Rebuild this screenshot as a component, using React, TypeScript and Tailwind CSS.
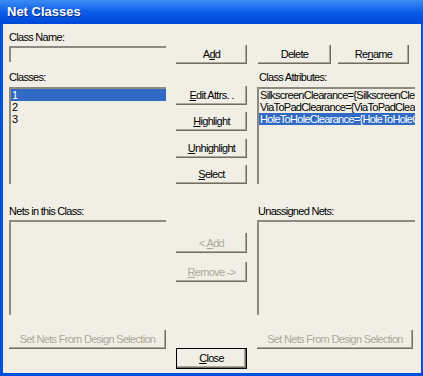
import React from 'react';

const btnBase =
  'flex items-center justify-center h-[19px] text-[11px] shadow-[inset_-1px_-1px_0_#716f64,inset_-2px_-2px_0_#aca899]';

function Btn({ children, className = '', disabled = false }: { children: React.ReactNode; className?: string; disabled?: boolean }) {
  return (
    <div className={`${btnBase} ${disabled ? 'text-[#aca899]' : 'text-black'} ${className}`}>
      <span className="whitespace-nowrap">{children}</span>
    </div>
  );
}

function ListBox({ items, selected, className = '' }: { items: string[]; selected?: number; className?: string }) {
  return (
    <div className={`border-t-2 border-l-2 border-[#8d8b81] overflow-hidden ${className}`}>
      {items.map((it, i) => (
        <div
          key={i}
          className={`h-[12px] leading-[12px] pl-[1px] whitespace-nowrap text-[11px] ${i === selected ? 'bg-[#316ac5] text-white' : 'text-black'}`}
        >
          {it}
        </div>
      ))}
    </div>
  );
}

export default function App() {
  return (
    <div
      className="w-[423px] h-[376px] bg-[#0050e0] flex flex-col tracking-[-0.7px]"
      style={{ fontFamily: '"Liberation Sans", Arial, sans-serif' }}
    >
      {/* Title bar */}
      <div className="h-[24px] shrink-0 flex items-center pl-[7px] bg-gradient-to-b from-[#3d8cf4] via-[#0a5ce8] to-[#0049da]">
        <span className="text-white font-bold text-[13px] tracking-[0px] [text-shadow:1px_1px_0_#0a2a8a]">Net Classes</span>
      </div>

      {/* Client */}
      <div className="flex-1 ml-[3px] mr-[2px] mb-[3px] bg-[#f1efe5] pl-[6px] pt-[7px] text-[11px] text-black">
        <div className="grid grid-cols-[157px_71px_158px] gap-x-[10px]">
          {/* Left column */}
          <div className="flex flex-col">
            <div className="h-[13px] leading-[13px]">Class Name:</div>
            <div className="mt-[2px] h-[16px] border-t-2 border-l-2 border-[#8d8b81]" />
            <div className="mt-[9px] h-[13px] leading-[13px]">Classes:</div>
            <ListBox className="mt-[3px] h-[97px]" items={['1', '2', '3']} selected={0} />
            <div className="mt-[21px] h-[13px] leading-[13px]">Nets in this Class:</div>
            <ListBox className="mt-[2px] h-[95px]" items={[]} />
            <Btn disabled className="mt-[15px] h-[18px]">Set Nets From Design Selection</Btn>
          </div>

          {/* Middle column */}
          <div className="flex flex-col pt-[14px]">
            <Btn>
              A<span className="underline">d</span>d
            </Btn>
            <Btn className="mt-[22px]">
              <span className="underline">E</span>dit Attrs. .
            </Btn>
            <Btn className="mt-[7px]">
              <span className="underline">H</span>ighlight
            </Btn>
            <Btn className="mt-[8px]">
              <span className="underline">U</span>nhighlight
            </Btn>
            <Btn className="mt-[7px]">
              <span className="underline">S</span>elect
            </Btn>
            <Btn disabled className="mt-[49px] h-[20px]">
              &lt; <span className="underline">A</span>dd
            </Btn>
            <Btn disabled className="mt-[9px] h-[20px]">
              <span className="underline">R</span>emove -&gt;
            </Btn>
            <Btn className="mt-[66px] h-[21px] border border-black">
              <span className="underline">C</span>lose
            </Btn>
          </div>

          {/* Right column */}
          <div className="flex flex-col pt-[14px]">
            <div className="flex gap-[7px] pl-[1px]">
              <Btn className="w-[73px]">Delete</Btn>
              <Btn className="w-[71px]">
                Re<span className="underline">n</span>ame
              </Btn>
            </div>
            <div className="mt-[7px] h-[13px] leading-[13px] pl-[2px]">Class Attributes:</div>
            <ListBox
              className="mt-[3px] h-[97px]"
              items={[
                'SilkscreenClearance={SilkscreenClearance}',
                'ViaToPadClearance={ViaToPadClearance}',
                'HoleToHoleClearance={HoleToHoleClearance}',
              ]}
              selected={2}
            />
            <div className="mt-[21px] h-[13px] leading-[13px] pl-[1px]">Unassigned Nets:</div>
            <ListBox className="mt-[2px] h-[95px]" items={[]} />
            <Btn disabled className="mt-[15px] h-[18px] mr-[2px]">Set Nets From Design Selection</Btn>
          </div>
        </div>
      </div>
    </div>
  );
}
